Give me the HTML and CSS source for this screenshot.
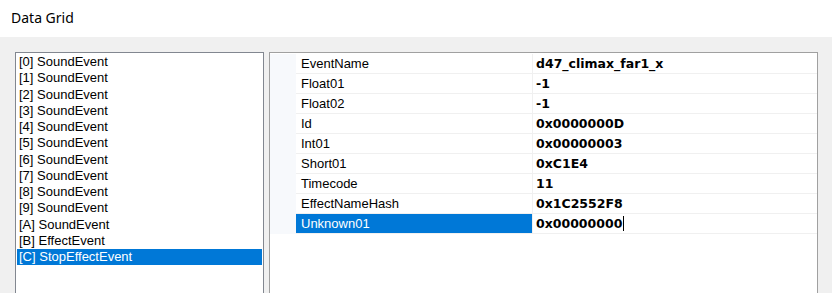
FILE: index.html
```html
<!DOCTYPE html>
<html>
  <head>
    <link rel="stylesheet" href="styles.css">
  </head>
  <body>
    <div class="titlebar">Data Grid</div>

    <div class="workspace">
      <ul class="eventlist">
        <li>[0] SoundEvent</li>
        <li>[1] SoundEvent</li>
        <li>[2] SoundEvent</li>
        <li>[3] SoundEvent</li>
        <li>[4] SoundEvent</li>
        <li>[5] SoundEvent</li>
        <li>[6] SoundEvent</li>
        <li>[7] SoundEvent</li>
        <li>[8] SoundEvent</li>
        <li>[9] SoundEvent</li>
        <li>[A] SoundEvent</li>
        <li>[B] EffectEvent</li>
        <li class="selected">[C] StopEffectEvent</li>
      </ul>

      <div class="propgrid">
        <div class="prop">
          <span class="gutter"></span>
          <span class="name">EventName</span>
          <span class="value">d47_climax_far1_x</span>
        </div>
        <div class="prop">
          <span class="gutter"></span>
          <span class="name">Float01</span>
          <span class="value">-1</span>
        </div>
        <div class="prop">
          <span class="gutter"></span>
          <span class="name">Float02</span>
          <span class="value">-1</span>
        </div>
        <div class="prop">
          <span class="gutter"></span>
          <span class="name">Id</span>
          <span class="value">0x0000000D</span>
        </div>
        <div class="prop">
          <span class="gutter"></span>
          <span class="name">Int01</span>
          <span class="value">0x00000003</span>
        </div>
        <div class="prop">
          <span class="gutter"></span>
          <span class="name">Short01</span>
          <span class="value">0xC1E4</span>
        </div>
        <div class="prop">
          <span class="gutter"></span>
          <span class="name">Timecode</span>
          <span class="value">11</span>
        </div>
        <div class="prop">
          <span class="gutter"></span>
          <span class="name">EffectNameHash</span>
          <span class="value">0x1C2552F8</span>
        </div>
        <div class="prop active">
          <span class="gutter"></span>
          <span class="name">Unknown01</span>
          <span class="value">0x00000000<span class="caret"></span></span>
        </div>
      </div>
    </div>
  </body>
</html>
```

FILE: styles.css
```css
body {
  margin: 0;
  width: 832px;
  height: 293px;
  overflow: hidden;
  background-color: #f0f0f0;
}

.titlebar {
  height: 37px;
  box-sizing: border-box;
  padding-left: 11px;
  background-color: #fff;
  font-family: "Noto Sans", sans-serif;
  font-size: 14px;
  line-height: 35px;
  color: #000;
}

.workspace {
  display: flex;
  align-items: flex-start;
  gap: 5px;
  padding: 15px 0 0 15px;
}

/* list and grid run on past the bottom of the window */
.eventlist {
  margin: 0;
  padding: 1px;
  list-style: none;
  width: 249px;
  height: 241px;
  box-sizing: border-box;
  border: 1px solid #828790;
  border-bottom: 0;
  background-color: #fff;
  font-family: "Liberation Sans", Arial, sans-serif;
  font-size: 13px;
  color: #000;
}
.eventlist li {
  height: 16.25px;
  line-height: 16px;
  padding-left: 2px;
  white-space: nowrap;
}
.eventlist li.selected {
  background-color: #0078d7;
  color: #fff;
}

.propgrid {
  width: 549px;
  height: 241px;
  box-sizing: border-box;
  padding-top: 1px;
  border: 1px solid #a0a0a0;
  border-bottom: 0;
  background-color: #fff;
}
.prop {
  display: grid;
  grid-template-columns: 26px 237px 1fr;
  height: 20px;
  line-height: 19px;
}
.prop .gutter {
  background-color: #f7f9fc;
}
.prop .name {
  padding-left: 5px;
  border-right: 1px solid #f0f0f0;
  border-bottom: 1px solid #f0f0f0;
  font-family: "Liberation Sans", Arial, sans-serif;
  font-size: 13px;
  color: #000;
}
.prop .value {
  padding-left: 3px;
  border-bottom: 1px solid #f0f0f0;
  font-family: "DejaVu Sans", sans-serif;
  font-weight: bold;
  font-size: 12.5px;
  color: #000;
  white-space: nowrap;
}
.prop.active .name {
  background-color: #0078d7;
  color: #fff;
}
.caret {
  display: inline-block;
  width: 1px;
  height: 15px;
  margin-left: 1px;
  vertical-align: -3px;
  background-color: #000;
}
```
